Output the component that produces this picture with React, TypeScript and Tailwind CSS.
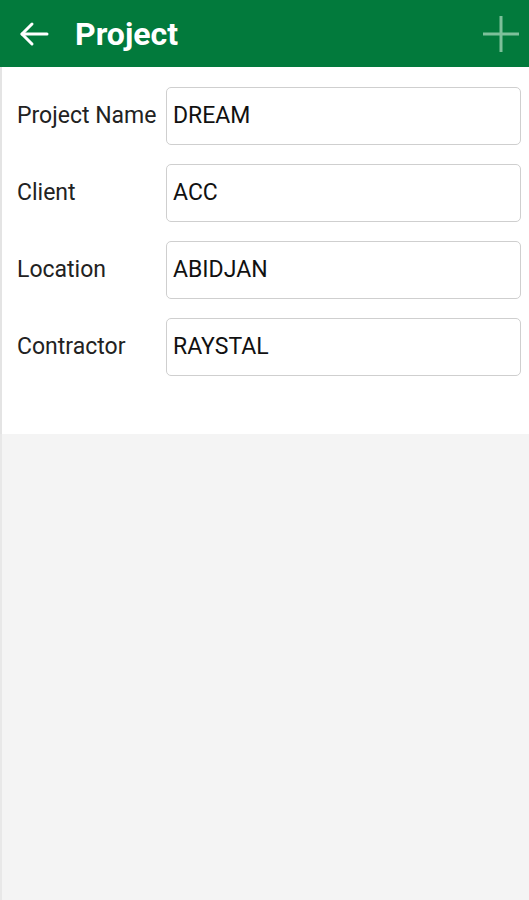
import React from 'react';

const fields = [
  { label: 'Project Name', value: 'DREAM' },
  { label: 'Client', value: 'ACC' },
  { label: 'Location', value: 'ABIDJAN' },
  { label: 'Contractor', value: 'RAYSTAL' },
];

export default function App() {
  return (
    <div className="flex h-[900px] w-[529px] flex-col bg-[#f4f4f4] font-['Roboto',sans-serif]">
      {/* Header */}
      <div className="flex h-[67px] shrink-0 items-center bg-[#027a3c] pl-[19px] pr-[9px] shadow-[0_1px_2px_rgba(0,0,0,0.15)]">
        <svg width="30" height="26" viewBox="0 0 30 26" fill="none" stroke="white" strokeWidth="3" strokeLinecap="round" strokeLinejoin="round">
          <path d="M28 13H3" />
          <path d="M13 3L3 13l10 10" />
        </svg>
        <span className="ml-[26px] text-[32px] font-bold leading-none text-white">Project</span>
        <div className="flex-1" />
        <svg width="38" height="38" viewBox="0 0 38 38" fill="none" stroke="#7dc09a" strokeWidth="3">
          <path d="M19 1v36" />
          <path d="M1 19h36" />
        </svg>
      </div>

      {/* Form */}
      <div className="flex h-[367px] shrink-0 flex-col gap-[19px] border-l-2 border-[#e4e4e4] bg-white pl-[15px] pr-[8px] pt-[20px]">
        {fields.map((f) => (
          <div key={f.label} className="flex items-center">
            <label className="w-[149px] text-[23px] text-[#222]">{f.label}</label>
            <div className="flex h-[58px] flex-1 items-center rounded-[5px] border-[1.5px] border-[#cfcfcf] bg-white px-[6px] text-[23px] text-[#111]">
              {f.value}
            </div>
          </div>
        ))}
      </div>

      <div className="flex-1 border-l-2 border-[#e8e8e8]" />
    </div>
  );
}
